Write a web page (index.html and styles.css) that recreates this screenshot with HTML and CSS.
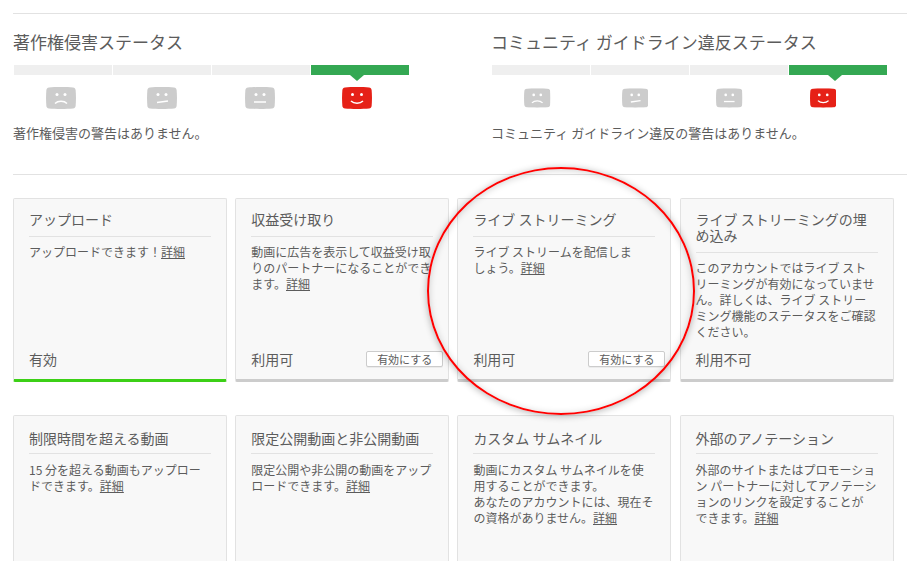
FILE: index.html
```html
<!DOCTYPE html>
<html lang="ja">
<head>
  <meta charset="UTF-8">
  <meta name="viewport" content="width=device-width, initial-scale=1.0">
  <title>ステータスと機能</title>
  <link rel="stylesheet" href="styles.css">
</head>
<body>
<svg class="defs" width="0" height="0" aria-hidden="true">
  <symbol id="face" viewBox="0 0 30 22">
    <path d="M3 .5C9-.1 21-.1 27 .5 28.6.7 29.4 1.6 29.6 3c.5 5 .5 11 0 16-.2 1.400-1 2.300-2.600 2.500-6 .6-18 .6-24 0C1.400 21.300.6 20.400.4 19-.1 14-.1 8 .4 3 .6 1.600 1.400.7 3 .5z"/>
  </symbol>
</svg>

<div class="status-row">
  <div class="status">
    <h2>著作権侵害ステータス</h2>
    <div class="meter">
      <div class="seg"></div>
      <div class="seg"></div>
      <div class="seg"></div>
      <div class="seg on"></div>
    </div>
    <div class="faces">
      <svg class="face" viewBox="0 0 30 22"><use href="#face"/><circle class="eye" cx="11" cy="7.500" r="1.500"/><circle class="eye" cx="19" cy="7.500" r="1.500"/><path class="mouth" d="M9 16.500c3-3 9-3 12 0"/></svg>
      <svg class="face" viewBox="0 0 30 22"><use href="#face"/><circle class="eye" cx="11" cy="7.500" r="1.500"/><circle class="eye" cx="19" cy="7.500" r="1.500"/><path class="mouth" d="M10 15.500l11-1.500"/></svg>
      <svg class="face" viewBox="0 0 30 22"><use href="#face"/><circle class="eye" cx="11" cy="7.500" r="1.500"/><circle class="eye" cx="19" cy="7.500" r="1.500"/><path class="mouth" d="M9 15h12"/></svg>
      <svg class="face happy" viewBox="0 0 30 22"><use href="#face"/><circle class="eye" cx="10.500" cy="7.500" r="1.500"/><circle class="eye" cx="19.500" cy="7.500" r="1.500"/><path class="mouth" d="M9 14c3 3 9 3 12 0"/></svg>
    </div>
    <p>著作権侵害の警告はありません。</p>
  </div>
  <div class="status">
    <h2>コミュニティ ガイドライン違反ステータス</h2>
    <div class="meter">
      <div class="seg"></div>
      <div class="seg"></div>
      <div class="seg"></div>
      <div class="seg on"></div>
    </div>
    <div class="faces">
      <svg class="face" viewBox="0 0 30 22"><use href="#face"/><circle class="eye" cx="11" cy="7.500" r="1.500"/><circle class="eye" cx="19" cy="7.500" r="1.500"/><path class="mouth" d="M9 16.500c3-3 9-3 12 0"/></svg>
      <svg class="face" viewBox="0 0 30 22"><use href="#face"/><circle class="eye" cx="11" cy="7.500" r="1.500"/><circle class="eye" cx="19" cy="7.500" r="1.500"/><path class="mouth" d="M10 15.500l11-1.500"/></svg>
      <svg class="face" viewBox="0 0 30 22"><use href="#face"/><circle class="eye" cx="11" cy="7.500" r="1.500"/><circle class="eye" cx="19" cy="7.500" r="1.500"/><path class="mouth" d="M9 15h12"/></svg>
      <svg class="face happy" viewBox="0 0 30 22"><use href="#face"/><circle class="eye" cx="10.500" cy="7.500" r="1.500"/><circle class="eye" cx="19.500" cy="7.500" r="1.500"/><path class="mouth" d="M9 14c3 3 9 3 12 0"/></svg>
    </div>
    <p>コミュニティ ガイドライン違反の警告はありません。</p>
  </div>
</div>

<div class="cards">
  <div class="card active">
    <h3>アップロード</h3>
    <div class="desc">アップロードできます！<a href="#">詳細</a></div>
    <div class="foot"><span>有効</span></div>
  </div>
  <div class="card">
    <h3>収益受け取り</h3>
    <div class="desc">動画に広告を表示して収益受け取りのパートナーになることができます。<a href="#">詳細</a></div>
    <div class="foot"><span>利用可</span><button>有効にする</button></div>
  </div>
  <div class="card">
    <h3>ライブ ストリーミング</h3>
    <div class="desc">ライブ ストリームを配信しま<br>しょう。<a href="#">詳細</a></div>
    <div class="foot"><span>利用可</span><button>有効にする</button></div>
  </div>
  <div class="card">
    <h3>ライブ ストリーミングの埋め込み</h3>
    <div class="desc">このアカウントではライブ ストリーミングが有効になっていません。詳しくは、ライブ ストリーミング機能のステータスをご確認ください。</div>
    <div class="foot"><span>利用不可</span></div>
  </div>
  <div class="card">
    <h3>制限時間を超える動画</h3>
    <div class="desc">15 分を超える動画もアップロードできます。<a href="#">詳細</a></div>
    <div class="foot"></div>
  </div>
  <div class="card">
    <h3>限定公開動画と非公開動画</h3>
    <div class="desc">限定公開や非公開の動画をアップロードできます。<a href="#">詳細</a></div>
    <div class="foot"></div>
  </div>
  <div class="card">
    <h3>カスタム サムネイル</h3>
    <div class="desc">動画にカスタム サムネイルを使用することができます。<br>あなたのアカウントには、現在その資格がありません。<a href="#">詳細</a></div>
    <div class="foot"></div>
  </div>
  <div class="card">
    <h3>外部のアノテーション</h3>
    <div class="desc">外部のサイトまたはプロモーション パートナーに対してアノテーションのリンクを設定することが<br>できます。<a href="#">詳細</a></div>
    <div class="foot"></div>
  </div>
</div>

<div class="circle"></div>
</body>
</html>
```
FILE: styles.css
```css
html, body {
  height: 100%;
  overflow: hidden;
}

body {
  margin: 0;
  padding: 13px 0 0 13px;
  box-sizing: border-box;
  position: relative;
  font-family: "Noto Sans CJK JP", sans-serif;
  color: #5c5c5c;
  background: #fff;
}

.defs {
  position: absolute;
}

.status-row {
  display: grid;
  grid-template-columns: 478px 416px;
  height: 160px;
  border-top: 1px solid #e2e2e2;
  border-bottom: 1px solid #e2e2e2;
}

.status h2 {
  margin: 16px 0 0;
  font-size: 17px;
  font-weight: 400;
  line-height: 24px;
}

.meter {
  display: grid;
  grid-template-columns: repeat(4, 98px);
  gap: 1px;
  margin: 11px 0 0 1px;
}

.seg {
  height: 10px;
  background: #efefef;
  position: relative;
}

.seg.on {
  background: #34a853;
}

.seg.on::after {
  content: "";
  position: absolute;
  top: 10px;
  left: 39px;
  border-top: 6px solid #34a853;
  border-left: 7px solid transparent;
  border-right: 7px solid transparent;
}

.faces {
  display: flex;
  margin: 12px 0 0 33px;
}

.face {
  width: 30px;
  height: 22px;
  margin-right: 71px;
  fill: #ccc;
}

.face:nth-child(2) {
  margin-right: 68px;
}

.face:nth-child(3) {
  margin-right: 67px;
}

.face.happy {
  fill: #e62117;
}

.face .eye {
  fill: #fff;
}

.face .mouth {
  fill: none;
  stroke: #fff;
  stroke-width: 1.500;
}

.status p {
  margin: 14px 0 0;
  font-size: 13px;
  line-height: 20px;
}

.cards {
  display: grid;
  grid-template-columns: repeat(4, 214px);
  gap: 33px 8.200px;
  margin-top: 23px;
}

.card {
  display: flex;
  flex-direction: column;
  height: 184px;
  box-sizing: border-box;
  padding: 12px 15px 0;
  background: #f8f8f8;
  border: 1px solid #e2e2e2;
  border-bottom: 3px solid #ccc;
  border-radius: 2px;
}

.card.active {
  border-bottom-color: #3cd016;
}

.card h3 {
  margin: 0;
  padding-bottom: 9px;
  border-bottom: 1px solid #e2e2e2;
  font-size: 14px;
  font-weight: 400;
  line-height: 16px;
}

/* second row sits a touch lower inside its cards */
.card:nth-child(n+5) {
  padding-top: 14px;
}

.card:nth-child(n+5) h3 {
  padding-bottom: 7px;
}

.card:nth-child(n+5) .desc {
  margin-top: 8px;
}

.desc {
  margin-top: 7px;
  font-size: 12px;
  line-height: 16px;
}

.desc a {
  color: #5c5c5c;
}

.foot {
  display: flex;
  justify-content: space-between;
  align-items: center;
  margin: auto -10px 0 0;
  height: 24px;
  padding-bottom: 8px;
  font-size: 14px;
}

.foot button {
  width: 77px;
  height: 16px;
  padding: 0;
  background: #fff;
  border: 1px solid #ccc;
  border-radius: 2px;
  box-shadow: 0 1px 0 rgba(0, 0, 0, .05);
  font: 11px/14px "Noto Sans CJK JP", sans-serif;
  color: #5c5c5c;
}

.circle {
  position: absolute;
  left: 427px;
  top: 167px;
  width: 268px;
  height: 248px;
  box-sizing: border-box;
  border: 2px solid #f00;
  border-radius: 50%;
  box-shadow: 0 1px 7px rgba(0, 0, 0, .3), inset 0 1px 7px rgba(0, 0, 0, .18);
}
```
